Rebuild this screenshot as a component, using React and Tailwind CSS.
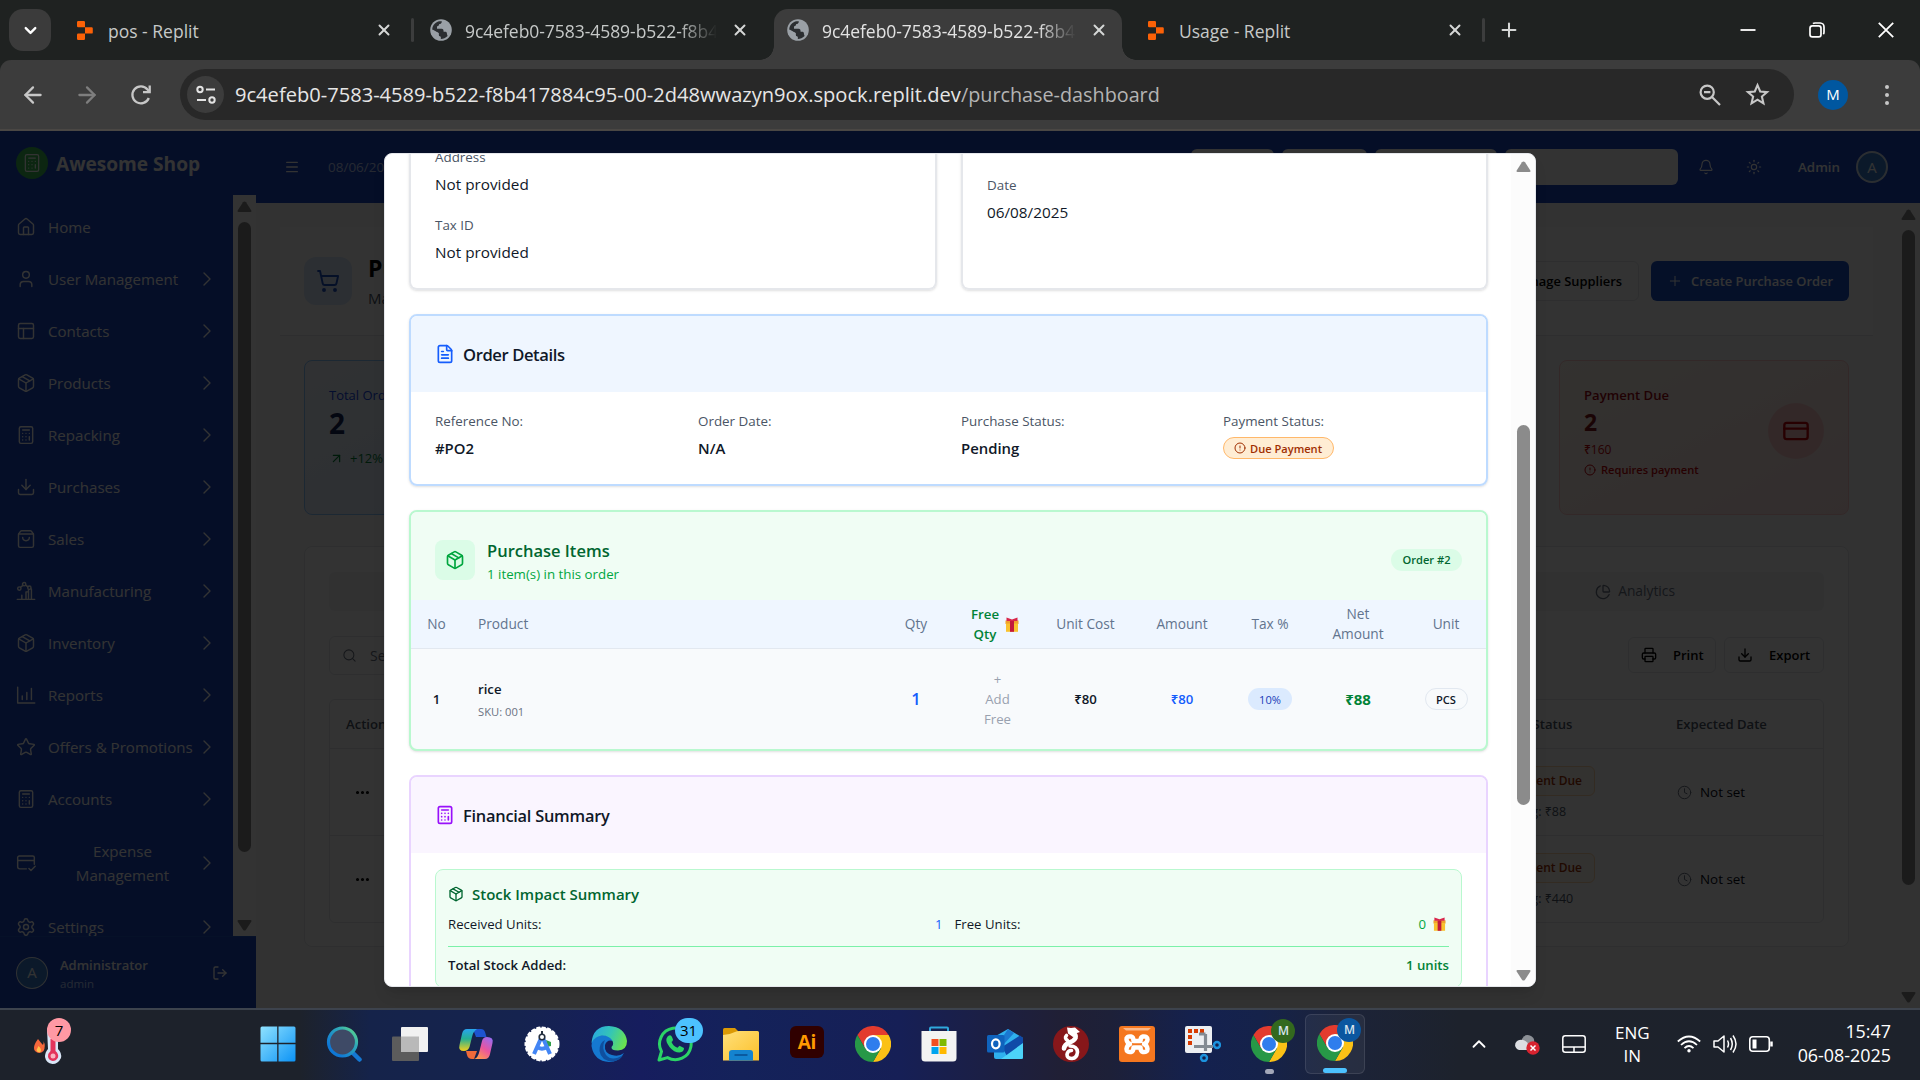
import React from "react";
import {
  ArrowLeft, ArrowRight, Bell, Calculator, ChevronDown, ChevronRight, ChevronUp, CircleAlert, Clock,
  CreditCard, Download, FileText, House, LogOut, Menu, Ellipsis, Package, PanelsTopLeft, ChartPie, Plus,
  Printer, Search, Settings, ShoppingBag, ShoppingCart, Star, Sun, ArrowUpRight, User, X,
} from "lucide-react";

/* ---------- browser chrome ---------- */

function ReplitIcon() {
  return (
    <svg className="h-[19px] w-4 shrink-0" viewBox="0 0 16 19">
      <path fill="#fb6107" d="M1.2 0H6.8Q8 0 8 1.2V6.3H1.2Q0 6.3 0 5.1V1.2Q0 0 1.2 0ZM8 6.3H14.6Q15.8 6.3 15.8 7.5V11.4Q15.8 12.6 14.6 12.6H8ZM1.2 12.6H8V17.8Q8 19 6.8 19H1.2Q0 19 0 17.8V13.8Q0 12.6 1.2 12.6Z" />
    </svg>
  );
}

function GlobeIcon() {
  return (
    <svg className="size-[22px] shrink-0" viewBox="0 0 22 22">
      <circle cx="11" cy="11" r="10.8" fill="#9aa0a6" />
      <path fill="#2b2e31" d="M2.2 10.5C2.6 6 5.5 3 9.5 2.3L11.8 2.2C11.9 4 10.8 5 9.3 5.1C8.9 6.6 8.3 7.2 7 7.4V9.8H11.6C13.2 9.9 13.6 11 13.6 12.8H15.6C16.6 12.8 17 13.8 17 15.2L17.6 17C15.5 19.2 13 20 10.6 19.9V17.8C9.2 17.6 8.6 16.8 8.6 15.2V14L2.4 11.6Z" />
      <path fill="#9aa0a6" d="M2.6 10.6L8.6 14V15.2C8.6 16.8 9.2 17.6 10.6 17.8V21L4 18L1 12Z" />
    </svg>
  );
}

function Tab({ icon, title, fade, active }) {
  return (
    <div className={"flex h-full min-w-0 flex-1 items-center pl-[13px] " + (fade ? "pr-[11px]" : "pr-[15px]")}>
      {icon}
      <span
        className={
          "min-w-0 flex-1 overflow-hidden whitespace-nowrap pt-0.5 text-[17.5px] leading-6 " +
          (active ? "text-[#e3e3e3] " : "text-[#c6c9c8] ") +
          (fade ? "ml-[13px] tracking-[-0.05px] [mask-image:linear-gradient(to_right,black_85%,transparent_100%)]" : "ml-[15px]")
        }
      >
        {title}
      </span>
      <X className="ml-[14px] size-[18px] shrink-0 text-[#d5d7d6]" strokeWidth={2.6} />
    </div>
  );
}

function TabStrip() {
  return (
    <div className="flex h-[60px] shrink-0 items-center bg-[#1f2221]">
      <div className="ml-[9px] flex size-[42px] items-center justify-center rounded-[14px] bg-[#3b3b3b]">
        <ChevronDown className="size-[19px] text-white" strokeWidth={3} />
      </div>
      <div className="ml-[13px] flex h-full w-[344px]">
        <Tab icon={<ReplitIcon />} title="pos - Replit" />
      </div>
      <div className="ml-[3px] h-6 w-[3px] rounded bg-[#3c3d3d]" />
      <div className="ml-[3px] flex h-full w-[343px]">
        <Tab icon={<GlobeIcon />} title="9c4efeb0-7583-4589-b522-f8b417884c95" fade />
      </div>
      <div className="flex h-full w-[376px] items-end">
        <div className="size-[14px] bg-[radial-gradient(circle_at_0_0,#1f2221_13.5px,#3c3c3c_14px)]" />
        <div className="flex h-[51px] w-[348px] rounded-t-[14px] bg-[#3c3c3c] pb-[9px] pr-[3px]">
          <Tab icon={<GlobeIcon />} title="9c4efeb0-7583-4589-b522-f8b417884c95" fade active />
        </div>
        <div className="size-[14px] bg-[radial-gradient(circle_at_100%_0,#1f2221_13.5px,#3c3c3c_14px)]" />
      </div>
      <div className="-ml-px flex h-full w-[344px]">
        <Tab icon={<ReplitIcon />} title="Usage - Replit" />
      </div>
      <div className="ml-[3px] h-6 w-[3px] rounded bg-[#3c3d3d]" />
      <Plus className="ml-[13px] size-[22px] text-[#d5d7d6]" strokeWidth={2.2} />
      <div className="ml-auto mr-[26px] flex items-center text-white">
        <svg className="size-4" viewBox="0 0 16 16"><path d="M0.5 8H15.5" stroke="currentColor" strokeWidth="1.8" /></svg>
        <svg className="ml-[53px] size-4" viewBox="0 0 16 16" fill="none" stroke="currentColor" strokeWidth="1.7">
          <rect x="1" y="3.8" width="11" height="11" rx="2.4" />
          <path d="M4 1.6Q4.6 1 6 1H11.2A3.9 3.9 0 0 1 15 4.9V10Q15 11.5 14.3 12.2" />
        </svg>
        <svg className="ml-[53px] size-4" viewBox="0 0 16 16"><path d="M0.8 0.8L15.2 15.2M15.2 0.8L0.8 15.2" stroke="currentColor" strokeWidth="1.8" /></svg>
      </div>
    </div>
  );
}

function AddressBar() {
  return (
    <div className="bg-[#1f2221]">
      <div className="flex h-[71px] items-center rounded-t-[11px] border-b-2 border-[#4a4744] bg-[#3c3c3c] text-[#c7c7c7]">
        <ArrowLeft className="ml-5 size-[26px]" strokeWidth={2.1} />
        <ArrowRight className="ml-7 size-[26px] text-[#7e7e7e]" strokeWidth={2.1} />
        <svg className="ml-[30px] size-[22px]" viewBox="0 0 22 22" fill="none" stroke="currentColor" strokeWidth="2.3">
          <path d="M18.8 14A8.5 8.5 0 1 1 17.5 5.5L19.5 7.6" />
          <path d="M19.7 1.5V8.2H13" />
        </svg>
        <div className="ml-[28px] flex h-[51px] w-[1614px] items-center rounded-full bg-[#282828] pl-[7px]">
          <div className="flex size-[37px] items-center justify-center rounded-full bg-[#3c3c3c]">
            <svg className="size-[20px]" viewBox="0 0 20 20" fill="none" stroke="#e3e3e3" strokeWidth="2">
              <circle cx="4" cy="4.5" r="2.7" /><path d="M10 4.5H19M1 15H10" /><circle cx="16" cy="15" r="2.7" />
            </svg>
          </div>
          <div className="ml-[11px] flex-1 whitespace-nowrap text-[20.1px] leading-7 text-[#e6e6e6]">
            9c4efeb0-7583-4589-b522-f8b417884c95-00-2d48wwazyn9ox.spock.replit.dev
            <span className="text-[19.8px] text-[#b4b4b4]">/purchase-dashboard</span>
          </div>
          <svg className="size-[22px]" viewBox="0 0 22 22" fill="none" stroke="currentColor" strokeWidth="2.2">
            <circle cx="8.2" cy="8.2" r="6.6" /><path d="M13 13L21 21M5 8.2H11.4" />
          </svg>
          <svg className="ml-6 mr-6 size-[25px]" viewBox="0 0 24 24" fill="none" stroke="currentColor" strokeWidth="2">
            <path d="M12 3L14.6 9.1L21.2 9.7L16.2 14L17.7 20.5L12 17L6.3 20.5L7.8 14L2.8 9.7L9.4 9.1Z" />
          </svg>
        </div>
        <div className="ml-6 flex size-[30px] items-center justify-center rounded-full bg-[#0057a0] text-[15px] font-medium text-white">M</div>
        <div className="ml-[37px] flex flex-col gap-1">
          <i className="size-1 rounded-full bg-[#c7c7c7]" /><i className="size-1 rounded-full bg-[#c7c7c7]" /><i className="size-1 rounded-full bg-[#c7c7c7]" />
        </div>
      </div>
    </div>
  );
}

/* ---------- shared ---------- */

function Triangle({ down, className = "" }) {
  return (
    <svg className={"h-[11px] w-[15px] shrink-0 fill-current " + className} viewBox="0 0 15 11">
      <path d={down ? "M1.5 0H13.5Q15 0.3 14.2 1.7L9 9.7Q7.5 11.5 6 9.7L0.8 1.7Q0 0.3 1.5 0Z" : "M1.5 11H13.5Q15 10.7 14.2 9.3L9 1.3Q7.5 -0.5 6 1.3L0.8 9.3Q0 10.7 1.5 11Z"} />
    </svg>
  );
}

function Gift({ className }) {
  return (
    <svg className={"shrink-0 " + className} viewBox="0 0 14 15">
      <rect x="0.5" y="3.5" width="13" height="3.5" fill="#f0a02c" />
      <rect x="1" y="6.5" width="12" height="8.3" fill="#f9c22e" />
      <rect x="5" y="3.5" width="4" height="11.3" fill="#c2183c" />
      <path d="M1.5 0.5L7 2.5L12.5 0.5V4H1.5Z" fill="#d9264a" />
    </svg>
  );
}

/* ---------- sidebar ---------- */

function svgIcon(children) {
  return function Icon({ className, strokeWidth }) {
    return (
      <svg className={className} viewBox="0 0 24 24" fill="none" stroke="currentColor" strokeWidth={strokeWidth} strokeLinecap="round" strokeLinejoin="round">
        {children}
      </svg>
    );
  };
}

const FactoryIcon = svgIcon(
  <><path d="M1.5 22H22.5M7 22V17M12 22V13H15M15 22V10.5M18.5 9.5V22" /><circle cx="4" cy="9" r="2" /><circle cx="9.8" cy="3.8" r="2" /><circle cx="16" cy="8" r="2" /><path d="M5.5 7.5L8.3 5.2M11.5 5L14.3 7" /></>
);
const ReportsIcon = svgIcon(<path d="M2 2.5V21.5H22.5M7.5 17.5V13M13 17.5V9M18.5 17.5V4" />);
const ExpenseIcon = svgIcon(<><path d="M12.5 19H4.5A2.5 2.5 0 0 1 2 16.5V5.5A2 2 0 0 1 4 3.5H20A2 2 0 0 1 22 5.5V13.5M2 9H22" /><path d="M15.5 18.5L18 21L23 16" /></>);

const NAV = [
  ["Home", House], ["User Management", User], ["Contacts", PanelsTopLeft], ["Products", Package],
  ["Repacking", Calculator], ["Purchases", Download], ["Sales", ShoppingBag], ["Manufacturing", FactoryIcon],
  ["Inventory", Package], ["Reports", ReportsIcon], ["Offers & Promotions", Star], ["Accounts", Calculator],
  ["Expense Management", ExpenseIcon], ["Settings", Settings],
];

function Sidebar() {
  return (
    <aside className="flex w-64 shrink-0 flex-col bg-[#1a48c4] text-white">
      <div className="flex h-16 items-center pl-4">
        <div className="flex size-8 items-center justify-center rounded-full bg-[#3dbf54]">
          <Calculator className="size-[20px]" strokeWidth={1.5} />
        </div>
        <span className="ml-2 whitespace-nowrap pt-0.5 text-[19.1px] font-bold">Awesome Shop</span>
      </div>
      <div className="flex h-[741px]">
        <nav className="flex flex-1 flex-col gap-1 overflow-hidden pl-4 pt-2">
          {NAV.map(([label, Icon], i) => (
            <div key={label} className="flex shrink-0 items-center py-3">
              <Icon className="size-[20px] shrink-0" strokeWidth={1.7} />
              <span className={"ml-[12px] flex-1 text-[15.1px] font-medium leading-6 " + (label.startsWith("Exp") ? "pl-[14px] pr-[12px] text-center" : "whitespace-nowrap")}>{label}</span>
              {i > 0 && <ChevronRight className="mr-[14px] size-6 shrink-0" strokeWidth={1.4} />}
            </div>
          ))}
        </nav>
        <div className="flex w-[23px] flex-col items-center bg-white pb-[5px] pt-[6px] text-[#888]">
          <Triangle />
          <div className="mt-[10px] h-[630px] w-[13px] rounded-full bg-[#888]" />
          <Triangle down className="mt-auto" />
        </div>
      </div>
      <div className="flex h-[72px] items-center border-t border-[#1f55c8] bg-[#1a48c4] px-4">
        <div className="flex size-8 items-center justify-center rounded-full border border-white/90 bg-[#3a7fd0] text-[15px]">A</div>
        <div className="ml-3 flex-1 pt-1">
          <div className="text-[13px] font-semibold leading-[19px]">Administrator</div>
          <div className="text-[11.5px] leading-[18px] text-[#bcd0ff]">admin</div>
        </div>
        <LogOut className="mr-[12px] size-4" strokeWidth={2} />
      </div>
    </aside>
  );
}

/* ---------- page behind the dialog ---------- */

function Header() {
  return (
    <header className="flex h-[72px] shrink-0 items-center bg-[#1a48c4] text-white">
      <Menu className="ml-[28px] size-4" strokeWidth={2} />
      <span className="ml-[28px] w-[200px] text-[13.5px] text-[#bdccf5]">08/06/2025</span>
      <div className="ml-auto flex h-9 gap-2">
        <div className="w-[83px] rounded-md bg-white" /><div className="w-[85px] rounded-md bg-white" />
        <div className="w-[122px] rounded-md bg-white" /><div className="w-[173px] rounded-md bg-white" />
      </div>
      <Bell className="ml-5 size-4" strokeWidth={1.7} />
      <Sun className="ml-8 size-4" strokeWidth={1.7} />
      <span className="ml-9 pt-px text-[13.3px] font-semibold">Admin</span>
      <div className="ml-4 mr-8 flex size-8 items-center justify-center rounded-full border-2 border-white/80 bg-[#3a7fd0] text-[15px] font-medium">A</div>
    </header>
  );
}

function OrderRow({ due }) {
  return (
    <div className="flex h-[87px] items-center border-t border-gray-200 px-6">
      <Ellipsis className="size-[17px] text-black" strokeWidth={2.4} />
      <div className="ml-auto w-[216px] pt-px">
        <span className="inline-flex h-[30px] w-[134px] items-center justify-end rounded-md border border-orange-200 bg-orange-50 pr-3 text-[12px] font-semibold text-orange-800">Payment Due</span>
        <div className="mt-2 pl-[5px] text-[12.5px] leading-4 text-gray-600">Outstanding: {due}</div>
      </div>
      <Clock className="size-[15px] text-gray-500" strokeWidth={1.6} />
      <span className="ml-[8px] w-[99px] text-[13.4px] text-gray-950">Not set</span>
    </div>
  );
}

function Page() {
  return (
    <main className="flex h-[805px] bg-gray-50">
      <div className="flex-1 px-6 pt-6">
        <section className="flex h-[109px] w-[1593px] items-center border-b border-gray-200 bg-white px-6">
          <div className="flex size-12 items-center justify-center rounded-xl bg-blue-100">
            <ShoppingCart className="size-6 text-[#1d4fc4]" strokeWidth={1.9} />
          </div>
          <div className="ml-4">
            <div className="text-[23px] font-bold leading-[30px] text-black">Purchase Management</div>
            <div className="mt-[3px] text-[15px] leading-6 text-gray-600">Manage purchase orders</div>
          </div>
          <div className="ml-auto flex h-10 w-[190px] items-center justify-end rounded-md border border-gray-200 pr-4 pt-0.5 text-[12.9px] font-semibold text-black">Manage Suppliers</div>
          <div className="ml-3 flex h-10 w-[198px] items-center rounded-md bg-[#1a52c8] pl-4 text-[12.9px] font-semibold text-white">
            <Plus className="mr-2 size-4" strokeWidth={1.5} /><span className="pt-0.5">Create Purchase Order</span>
          </div>
        </section>

        <section className="ml-6 mt-6 flex h-[155px] w-[1545px] justify-between">
          <div className="w-[290px] rounded-lg border border-blue-300 bg-linear-to-br from-blue-50 to-blue-100 pl-6 pt-6">
            <div className="text-[13px] font-medium leading-5 text-blue-700">Total Orders</div>
            <div className="text-[28px] font-bold leading-9 text-blue-950">2</div>
            <div className="mt-[7px] flex items-center text-[13px] font-medium leading-5 text-green-700">
              <ArrowUpRight className="mr-[6px] size-[15px]" />+12%
            </div>
          </div>
          <div className="flex w-[290px] justify-between rounded-lg border border-red-200 bg-linear-to-br from-orange-50 to-red-100 pl-6 pr-6">
            <div className="pt-6">
              <div className="text-[13.1px] font-semibold leading-5 text-red-800">Payment Due</div>
              <div className="-mt-px text-[23px] font-bold leading-9 text-red-900">2</div>
              <div className="mt-px text-[12px] font-medium leading-[18px] text-red-700">₹160</div>
              <div className="mt-px flex items-center text-[11.1px] font-semibold leading-5 text-red-700">
                <CircleAlert className="mr-[5px] size-[12px]" />Requires payment
              </div>
            </div>
            <div className="mt-[42px] flex size-14 items-center justify-center rounded-full bg-red-200">
              <CreditCard className="size-7 text-red-700" strokeWidth={2} />
            </div>
          </div>
        </section>

        <section className="ml-6 mt-[31px] h-[401px] w-[1545px] rounded-lg border border-gray-200 bg-white px-6 pt-[25px]">
          <div className="flex h-[39px] items-center justify-end rounded-md bg-gray-100 pr-[149px] text-[13.8px] font-medium text-gray-500">
            <ChartPie className="mr-[7px] size-4" strokeWidth={1.9} />Analytics
          </div>
          <div className="mt-[26px] flex h-9 items-center">
            <div className="flex h-[39px] w-[400px] items-center rounded-md border border-gray-200 pl-3 text-[14px] text-gray-500">
              <Search className="mr-[13px] size-[15px]" strokeWidth={1.7} />Search orders...
            </div>
            <div className="ml-auto flex h-9 w-[88px] items-center rounded-md border border-gray-200 pl-3 text-[13px] font-semibold text-black">
              <Printer className="mr-4 size-4" strokeWidth={2} /><span className="pt-px">Print</span>
            </div>
            <div className="ml-2 flex h-9 w-[100px] items-center rounded-md border border-gray-200 pl-3 text-[13px] font-semibold text-black">
              <Download className="mr-4 size-4" strokeWidth={2} /><span className="pt-px">Export</span>
            </div>
          </div>
          <div className="mt-[26px] h-[224px] rounded-md border border-gray-200">
            <div className="flex h-12 items-center pl-4 pt-0.5 text-[13.1px] font-semibold text-gray-600">
              <span>Actions</span><span className="ml-auto w-[203px]">Payment Status</span><span className="w-[147px]">Expected Date</span>
            </div>
            <OrderRow due="₹88" />
            <OrderRow due="₹440" />
          </div>
        </section>
      </div>
      <div className="flex w-6 flex-col items-center pb-[5px] pt-[6px] text-[#888]">
        <Triangle />
        <div className="mt-[10px] h-[655px] w-[13px] rounded-full bg-[#888]" />
        <Triangle down className="mt-auto" />
      </div>
    </main>
  );
}

/* ---------- dialog ---------- */

function Field({ label, children, className = "" }) {
  return (
    <div className={className}>
      <div className="text-[13.4px] font-medium leading-5 text-gray-600">{label}</div>
      <div className="mt-[5px] text-[15.3px] leading-6 text-gray-900">{children}</div>
    </div>
  );
}

const COLS = "grid grid-cols-[51px_412px_84px_79px_97px_96px_80px_96px_80px] items-center text-center";

function Dialog() {
  return (
    <div className="flex h-[834px] w-[1152px] overflow-hidden rounded-lg border border-gray-200 bg-white shadow-lg">
      <div className="h-[832px] w-[1127px] overflow-hidden pl-6 pr-[23px]">
        <div className="-mt-2 flex gap-6">
          <div className="h-[144px] flex-1 rounded-b-lg border-2 border-t-0 border-gray-200 pl-6 pt-[1px] shadow-sm">
            <Field label="Address">Not provided</Field>
            <Field className="mt-[19px]" label="Tax ID">Not provided</Field>
          </div>
          <div className="h-[144px] w-[527px] rounded-b-lg border-2 border-t-0 border-gray-200 pl-6 pt-[29px] shadow-sm">
            <Field label="Date">06/08/2025</Field>
          </div>
        </div>

        <section className="mt-6 h-[172px] overflow-hidden rounded-lg border-2 border-blue-200 shadow-sm">
          <div className="flex h-[76px] items-center bg-blue-50 pl-6">
            <FileText className="size-5 text-blue-600" strokeWidth={2} />
            <h3 className="ml-2 pt-0.5 text-[16.6px] font-semibold tracking-[-0.4px] text-gray-900">Order Details</h3>
          </div>
          <div className="grid grid-cols-[263px_263px_262px_1fr] pl-6 pt-[19px]">
            <Field label="Reference No:"><span className="text-[14.9px] font-semibold">#PO2</span></Field>
            <Field label="Order Date:"><span className="text-[14.9px] font-semibold">N/A</span></Field>
            <Field label="Purchase Status:"><span className="text-[14.9px] font-semibold">Pending</span></Field>
            <Field label="Payment Status:">
              <div className="pt-px">
                <span className="flex h-[22px] w-[111px] items-center rounded-full border border-orange-300 bg-orange-100 pl-[10px] text-[11.1px] font-semibold text-orange-800">
                  <CircleAlert className="mr-1 size-3" strokeWidth={2} /><span className="pt-px">Due Payment</span>
                </span>
              </div>
            </Field>
          </div>
        </section>

        <section className="mt-6 h-[241px] overflow-hidden rounded-lg border-2 border-green-200 bg-slate-50 shadow-sm">
          <div className="flex h-[88px] items-center bg-green-50 pl-6 pr-6 pt-2">
            <div className="flex size-10 items-center justify-center rounded-lg bg-green-100">
              <Package className="size-5 text-green-600" />
            </div>
            <div className="ml-3">
              <h3 className="text-[16.5px] font-semibold leading-7 text-green-800">Purchase Items</h3>
              <p className="-mt-px text-[13.3px] leading-5 text-green-600">1 item(s) in this order</p>
            </div>
            <span className="ml-auto flex h-[22px] w-[71px] items-center justify-center rounded-full bg-green-100 pt-px text-[11.1px] font-semibold text-green-800">Order #2</span>
          </div>
          <div className={COLS + " h-[49px] border-b border-slate-200 bg-blue-50 text-[13.7px] font-medium leading-5 text-slate-500"}>
            <span>No</span><span className="pl-4 text-left">Product</span><span>Qty</span>
            <span className="flex items-center justify-center gap-[6px] pr-[5px] text-green-700">
              <span className="text-[13.3px] font-semibold">Free<br />Qty</span><Gift className="h-[15px] w-[14px]" />
            </span>
            <span>Unit Cost</span><span>Amount</span><span>Tax %</span><span>Net<br />Amount</span><span>Unit</span>
          </div>
          <div className={COLS + " h-[100px] text-[13.2px] leading-5 text-gray-900"}>
            <span className="font-semibold">1</span>
            <div className="pl-4 pt-0.5 text-left">
              <div className="font-semibold">rice</div>
              <div className="mt-[3px] text-[11.2px] leading-5 text-gray-500">SKU: 001</div>
            </div>
            <span className="text-[16.5px] font-semibold text-blue-600">1</span>
            <span className="px-5 text-gray-400">+<br />Add<br />Free</span>
            <span className="font-semibold">₹80</span>
            <span className="font-semibold text-blue-600">₹80</span>
            <span className="mx-auto flex h-[22px] w-11 items-center justify-center rounded-full bg-blue-100 pt-px text-[11.1px] font-medium text-blue-800">10%</span>
            <span className="text-[15px] font-bold text-green-700">₹88</span>
            <span className="mx-auto flex h-[22px] w-[43px] items-center justify-center rounded-full border border-slate-200 pt-px text-[11.1px] font-semibold">PCS</span>
          </div>
        </section>

        <section className="mt-6 h-[320px] overflow-hidden rounded-lg border-2 border-purple-200">
          <div className="flex h-[76px] items-center bg-purple-50 pl-6">
            <Calculator className="size-5 text-purple-600" />
            <h3 className="ml-2 pt-0.5 text-[16.4px] font-semibold tracking-[-0.25px] text-gray-900">Financial Summary</h3>
          </div>
          <div className="mx-6 mt-4 h-[119px] rounded-lg border border-green-200 bg-green-50 px-3 pt-[12px] text-[13.2px] leading-5 text-gray-900">
            <div className="flex h-6 items-center text-[15px] font-semibold text-green-800">
              <Package className="mr-2 size-4" />Stock Impact Summary
            </div>
            <div className="mt-[8px] grid grid-cols-2 gap-3">
              <div className="flex justify-between"><span>Received Units:</span><span className="font-medium text-blue-600">1</span></div>
              <div className="flex"><span>Free Units:</span><span className="ml-auto font-medium text-green-600">0</span><Gift className="ml-[7px] mr-[3px] mt-[3px] h-[14px] w-[13px]" /></div>
            </div>
            <div className="mt-3 flex justify-between border-t border-green-300 pt-2 font-semibold">
              <span>Total Stock Added:</span><span className="text-green-700">1 units</span>
            </div>
          </div>
        </section>
      </div>
      <div className="flex w-6 flex-col items-center bg-[#fcfcfc] pb-[5px] pt-[7px] text-[#8b8b8b]">
        <Triangle />
        <div className="mt-[253px] h-[380px] w-[13px] rounded-full bg-[#8b8b8b]" />
        <Triangle down className="mt-auto" />
      </div>
    </div>
  );
}

/* ---------- taskbar ---------- */

const S = "size-9 shrink-0";

function ChromeLogo() {
  return (
    <svg className={S} viewBox="0 0 36 36">
      <path fill="#e33b2e" d="M2.4 9A18 18 0 0 1 33.6 9H18L10.2 22.5Z" />
      <path fill="#fbc116" d="M33.6 9A18 18 0 0 1 18 36L25.8 22.5L18 9Z" />
      <path fill="#279847" d="M18 36A18 18 0 0 1 2.4 9L10.2 22.5H25.8Z" />
      <circle cx="18" cy="18" r="9" fill="#fff" /><circle cx="18" cy="18" r="7" fill="#2f7ded" />
    </svg>
  );
}

function Windows() {
  return (
    <svg className={S} viewBox="0 0 36 36">
      <defs><linearGradient id="win" x1="0" y1="0" x2="1" y2="1"><stop stopColor="#8fe2ff" /><stop offset="1" stopColor="#0c93f5" /></linearGradient></defs>
      <path fill="url(#win)" d="M2 0.5H17.2V16.7H0.5V2Q0.5 0.5 2 0.5ZM18.5 0.5H34Q35.5 0.5 35.5 2V16.7H18.5ZM0.5 18.2H17.2V35.5H2Q0.5 35.5 0.5 34ZM18.5 18.2H35.5V34Q35.5 35.5 34 35.5H18.5Z" />
    </svg>
  );
}
function SearchApp() {
  return (
    <svg className={S} viewBox="0 0 36 36">
      <defs><linearGradient id="se" x1="1" y1="0" x2="0.2" y2="0.8"><stop stopColor="#63dd83" /><stop offset="0.4" stopColor="#2fa9b8" /><stop offset="1" stopColor="#0f78d6" /></linearGradient></defs>
      <path d="M26 26L33.5 33.5" stroke="#1478d4" strokeWidth="4.5" strokeLinecap="round" />
      <circle cx="16.5" cy="16" r="14" fill="#3e4a66" stroke="url(#se)" strokeWidth="3.2" />
    </svg>
  );
}
function TaskView() {
  return (
    <svg className={S} viewBox="0 0 36 36">
      <rect x="0" y="10.5" width="27" height="24.5" rx="1" fill="#5c5c5c" />
      <rect x="9" y="1" width="27" height="25" rx="1" fill="#f1f1f1" />
      <rect x="9" y="10.5" width="18" height="15.5" fill="#b9b9b9" />
    </svg>
  );
}
function Copilot() {
  return (
    <svg className={S} viewBox="0 0 36 36">
      <defs>
        <linearGradient id="ca" x1="0" y1="0" x2="0" y2="1"><stop stopColor="#28a4f0" /><stop offset="0.45" stopColor="#25b092" /><stop offset="1" stopColor="#f4cf1c" /></linearGradient>
        <linearGradient id="cb" x1="0.8" y1="0" x2="0.2" y2="1"><stop stopColor="#9a6cf0" /><stop offset="0.5" stopColor="#e9559f" /><stop offset="1" stopColor="#ff9c4a" /></linearGradient>
      </defs>
      <path fill="#1d54d0" d="M15 3H23Q26 3 27 6L28.5 11H18Z" />
      <path fill="url(#ca)" d="M9 3H19Q15 5 13.5 13L11.5 21Q10 25 6 25Q0 25 1.5 19L4 8Q5 3 9 3Z" />
      <path fill="#ee6a3a" d="M8 25H19L16 33H14Q10 33 9 29Z" />
      <path fill="url(#cb)" d="M27 33H16Q20 32 21.5 25L24 15Q25 11 29 11Q36 11 34.5 17L32 28Q31 33 27 33Z" />
    </svg>
  );
}
function Studio() {
  return (
    <svg className={S} viewBox="0 0 36 36">
      <circle cx="18" cy="18" r="16.5" fill="#fff" stroke="#fff" strokeWidth="2" strokeDasharray="4 1.5" />
      <path d="M22 14L27 16V20L23 21Z" fill="#2f9e4a" />
      <path d="M18 10L10 28M18 10L26 28M12.5 20.5Q18 25 23.5 20.5" fill="none" stroke="#4285f4" strokeWidth="4" />
      <circle cx="18" cy="11" r="2.8" fill="#fff" stroke="#253040" strokeWidth="1.6" /><path d="M18 5V8" stroke="#253040" strokeWidth="2" />
    </svg>
  );
}
function Edge() {
  return (
    <svg className={S} viewBox="0 0 36 36">
      <defs>
        <linearGradient id="ea" x1="0" y1="0.3" x2="1" y2="0.6"><stop stopColor="#28a8e0" /><stop offset="0.5" stopColor="#35c6b4" /><stop offset="1" stopColor="#6be34c" /></linearGradient>
      </defs>
      <path fill="#1578d0" d="M1 15Q6 8 14 9Q21 10 22 15Q16 13 14 19Q13 27 21 29Q28 31 33 27Q28 36 18 36Q3 35 0.5 20Z" />
      <path fill="#0f4f9f" d="M14 14Q10 22 15 29Q21 36 32 29Q30 34 22 35.5Q10 35 8.5 25Q8 17 14 14Z" />
      <path fill="url(#ea)" d="M0.5 17Q2 0 18 0Q34 1 36 15Q36 24 27 24.5Q20 24.5 20.5 21Q23.5 18 21 14Q17 9 11 9.5Q4 10 0.5 17Z" />
    </svg>
  );
}
function WhatsApp() {
  return (
    <div className="relative">
      <svg className={S} viewBox="0 0 36 36">
        <path d="M2 34L4.5 25.5A15.8 15.8 0 1 1 10.5 31.6Z" fill="none" stroke="#2bd366" strokeWidth="3" strokeLinejoin="round" />
        <path fill="#2bd366" d="M12 9.5Q14 8.5 15 11L16 13.5Q16 15 14.5 16Q16 20 20.5 21.8L22.5 19.8L27 22Q27 26 22.5 26.5Q17 26.5 12.5 21Q8.5 15.5 9.5 12.5Q10.5 10 12 9.5Z" />
      </svg>
      <span className="absolute left-[18px] top-[-8px] flex h-[25px] w-7 items-center justify-center rounded-full bg-[#4cc2ff] text-[15px] text-black">31</span>
    </div>
  );
}
function Explorer() {
  return (
    <svg className={S} viewBox="0 0 36 36">
      <defs><linearGradient id="fo" x1="0" y1="0" x2="1" y2="1"><stop stopColor="#ffe07a" /><stop offset="1" stopColor="#fcc02a" /></linearGradient></defs>
      <path fill="#dc9a05" d="M0 3.5Q0 2 1.5 2H12L15 5V12H0Z" />
      <path fill="url(#fo)" d="M0 9Q6 9 12 6Q14 5 16 5H34.5Q36 5 36 6.5V34.5H0Z" />
      <path fill="#1483cf" d="M6 34.5V27Q6 24 9 24H27Q30 24 30 27V34.5Z" /><path d="M11.5 29H24.5" stroke="#0a5aa0" strokeWidth="2" />
    </svg>
  );
}
function Illustrator() {
  return <div className="mb-1 flex h-8 w-[34px] items-center justify-center rounded-[6px] bg-[#300000] text-[19px] font-bold tracking-tight text-[#ff9a00]">Ai</div>;
}
function Store() {
  return (
    <svg className={S} viewBox="0 0 36 36">
      <path d="M9 8V2.5Q9 1.5 10 1.5H26Q27 1.5 27 2.5V8" fill="none" stroke="#2fa8dc" strokeWidth="2" />
      <path fill="#f3f3f3" d="M0.5 5H35.5V32Q35.5 35.5 32 35.5H4Q0.5 35.5 0.5 32Z" />
      <path fill="#f25022" d="M10.5 13H17.5V20H10.5Z" /><path fill="#7fba00" d="M18.5 13H25.5V20H18.5Z" /><path fill="#00a4ef" d="M10.5 21H17.5V28H10.5Z" /><path fill="#ffb900" d="M18.5 21H25.5V28H18.5Z" />
    </svg>
  );
}
function Outlook() {
  return (
    <svg className={S} viewBox="0 0 36 36">
      <path fill="#2fb1ee" d="M7 11L21 3L36 12V32Q36 33 34 33H9Q7 33 7 31Z" />
      <path fill="#0f4aa8" d="M15 21L33 9.5L36 12V18L20 30Z" />
      <path fill="#4cd3f8" d="M36 17V31Q36 33 34 33H14Z" />
      <path fill="#1b78d0" d="M15 12L21 3L27 7L17 18Z" />
      <rect x="0" y="9" width="17.5" height="17.5" rx="1.5" fill="#0f63bd" />
      <ellipse cx="8.8" cy="17.8" rx="3.8" ry="4.5" fill="none" stroke="#fff" strokeWidth="2.2" />
    </svg>
  );
}
function Dragon() {
  return (
    <svg className={S} viewBox="0 0 36 36">
      <circle cx="18" cy="18" r="18" fill="#87171a" />
      <path fill="none" stroke="#fff" strokeWidth="4.6" strokeLinecap="round" strokeLinejoin="round" d="M19 6Q23.5 8.500 22.5 12Q21 15 16.5 16.500Q11.500 18.500 11 22.5" />
      <path fill="none" stroke="#fff" strokeWidth="3.6" strokeLinecap="round" d="M14.500 14.5Q11 12 13.5 9.5M17 20Q24 20 24.500 26Q24 32 19 32.500Q14 32.500 14 28.500Q14.500 24.5 18.500 24.500" />
      <path fill="#fff" d="M14 1.5L18 2L22 1.500L27 6L22.5 7.500L20 11L15 7.5Z" />
    </svg>
  );
}
function Xampp() {
  return (
    <svg className={S} viewBox="0 0 36 36">
      <rect width="36" height="36" rx="3" fill="#f5771f" /><path d="M4 2H32L29 4.5H7Z" fill="#fbb98a" />
      <path fill="none" stroke="#fff" strokeWidth="4.5" strokeLinejoin="round" d="M12 10.5Q7 10 7.5 13.5Q8 17 11 18Q8 19 7.5 23Q7.5 26.5 12 26Q14.5 25.5 14.5 21.5H21.5Q21.5 25.5 24 26Q28.5 26.5 28.5 23Q28 19 25 18Q28 17 28.5 13.5Q28.5 10 24 10.5Q21.5 11 21.5 15H14.5Q14.5 11 12 10.5Z" />
    </svg>
  );
}
function Snip() {
  return (
    <svg className={S} viewBox="0 0 36 36">
      <rect x="0" y="0" width="27" height="27" rx="2" fill="#eceff2" />
      <path d="M3 5H19" stroke="#d83b01" strokeWidth="4" strokeDasharray="4 2" /><path d="M5 9V20" stroke="#d83b01" strokeWidth="4" strokeDasharray="4 2" />
      <path d="M20.5 8V25M14 8H20.5M9 20.5H28" stroke="#838b93" strokeWidth="3.2" />
      <circle cx="32" cy="19" r="3" fill="none" stroke="#1c93de" strokeWidth="2.4" /><circle cx="19" cy="32" r="3" fill="none" stroke="#1c93de" strokeWidth="2.4" />
    </svg>
  );
}
function ChromeProfile({ green }) {
  return (
    <div className="relative">
      <ChromeLogo />
      <span className={"absolute left-[20px] top-[-7px] flex size-6 items-center justify-center rounded-full text-[12px] font-semibold text-[#d8e4ee] " + (green ? "bg-[#33691e]" : "bg-[#0b57a0]")}>M</span>
    </div>
  );
}

const APPS = [Windows, SearchApp, TaskView, Copilot, Studio, Edge, WhatsApp, Explorer, Illustrator, ChromeLogo, Store, Outlook, Dragon, Xampp, Snip];

function Taskbar() {
  return (
    <footer className="flex h-[72px] shrink-0 items-center border-t-2 border-[#3d434d] bg-[linear-gradient(90deg,#1d222b_0,#1d222b_300px,#15234a_370px,#15234f_520px,#161d5e_640px,#14225a_740px,#161f56_900px,#201f35_1060px,#1d2038_1110px,#14214f_1200px,#15224a_1260px,#1c2338_1350px,#1d222c_1460px,#1d222b_1920px)]">
      <div className="relative mb-0.5 ml-[33px] h-[46px] w-10">
        <svg className="size-full" viewBox="0 0 40 46">
          <path fill="#f5673b" d="M5 18Q8 22 10 24Q11 22 10.5 20Q13 25 10.5 30Q6 34 2 30Q-1 26 5 18Z" /><path fill="#ffc24a" d="M5.5 25Q9 28 7.5 31Q4 32 3.5 29Z" />
          <path fill="#d9e6f7" d="M14 8Q20 2 25 8V28Q29 32 28 37Q25 43 19.5 43Q13 42 12 36Q12 31 15 28Z" />
          <path fill="#e3345b" d="M17.5 18H22.5V30Q26 33 25 36.5Q23 40 19.8 40Q16 39.5 15 36Q15 32 17.5 30Z" />
          <circle cx="20" cy="35" r="2.5" fill="#f8b5c1" />
        </svg>
        <span className="absolute left-[14px] top-[-3px] flex size-6 items-center justify-center rounded-full bg-[#ff99a4] text-[15px] text-black">7</span>
      </div>
      <div className="ml-[139px] flex h-full items-center pb-[2px] pl-[33px]">
        {APPS.map((A, i) => (
          <div key={i} className="flex w-[66.1px] justify-center"><A /></div>
        ))}
        <div className="flex h-full w-[66px] flex-col items-center pt-[16px]">
          <ChromeProfile green />
          <div className="mt-[7px] h-[5px] w-[9px] rounded-full bg-[#a2a7b8]" />
        </div>
        <div className="ml-[3px] flex h-[60px] w-[60px] flex-col items-center rounded-md border border-white/10 bg-white/5 pt-[10px]">
          <ChromeProfile />
          <div className="mt-[7px] h-[5px] w-6 rounded-full bg-[#4cc2ff]" />
        </div>
      </div>
      <div className="ml-auto mr-[29px] flex items-center pb-[3px] text-white">
        <ChevronUp className="size-[22px]" strokeWidth={2} />
        <svg className="ml-[24px] h-[22px] w-[26px]" viewBox="0 0 26 22">
          <path fill="#8c9096" d="M8 6Q11 0 17 3Q21 5 20 10L8 12Z" /><path fill="#dcdee2" d="M5 17Q0 15 1.5 10Q4 6 9 7Q13 8 17 14L14 17Z" />
          <circle cx="19" cy="15" r="6.7" fill="#d8232f" /><path d="M16.5 12.5L21.5 17.5M21.5 12.5L16.5 17.5" stroke="#fff" strokeWidth="1.5" />
        </svg>
        <svg className="ml-[22px] h-[18px] w-6" viewBox="0 0 24 18" fill="none" stroke="currentColor" strokeWidth="1.5"><rect x="0.8" y="0.8" width="22.4" height="16.4" rx="2.5" /><path d="M1 12H23M12 12V17" /></svg>
        <div className="ml-[29px] text-center text-[17px] leading-[23px]">ENG<br />IN</div>
        <svg className="ml-[27px] h-[18px] w-6" viewBox="0 0 24 18" fill="none" stroke="currentColor" strokeWidth="1.7">
          <path d="M0.8 6.5Q12 -3.5 23.2 6.5M4 10Q12 2.5 20 10M7.5 13.2Q12 8.8 16.5 13.2" /><circle cx="12" cy="15.8" r="1.7" fill="currentColor" stroke="none" />
        </svg>
        <svg className="ml-3 h-5 w-6" viewBox="0 0 24 20" fill="none" stroke="currentColor" strokeWidth="1.5" strokeLinejoin="round">
          <path d="M1 7H5L11 2V18L5 13H1ZM14.5 6.5Q16.5 10 14.5 13.5M17.5 4Q21 10 17.5 16M20 1.5Q26 10 20 18.5" />
        </svg>
        <svg className="ml-3 h-4 w-6" viewBox="0 0 24 16" fill="none" stroke="currentColor" strokeWidth="1.6"><rect x="0.8" y="0.8" width="19.5" height="14.4" rx="3" /><rect x="3.5" y="3.5" width="4" height="9" fill="currentColor" stroke="none" /><path d="M22.5 5.5V10.5" strokeWidth="2.5" /></svg>
        <div className="-mt-0.5 ml-[25px] text-right text-[17.9px] leading-6">15:47<br />06-08-2025</div>
      </div>
    </footer>
  );
}

export default function App() {
  return (
    <div className="flex h-[1080px] w-[1920px] flex-col overflow-hidden bg-black font-['Open_Sans','Noto_Sans',sans-serif]">
      <TabStrip />
      <AddressBar />
      <div className="relative flex h-[877px]">
        <Sidebar />
        <div className="flex min-w-0 flex-1 flex-col">
          <Header />
          <Page />
        </div>
        <div className="absolute inset-0 flex items-start justify-center bg-black/80 pt-[22px]">
          <Dialog />
        </div>
      </div>
      <Taskbar />
    </div>
  );
}
